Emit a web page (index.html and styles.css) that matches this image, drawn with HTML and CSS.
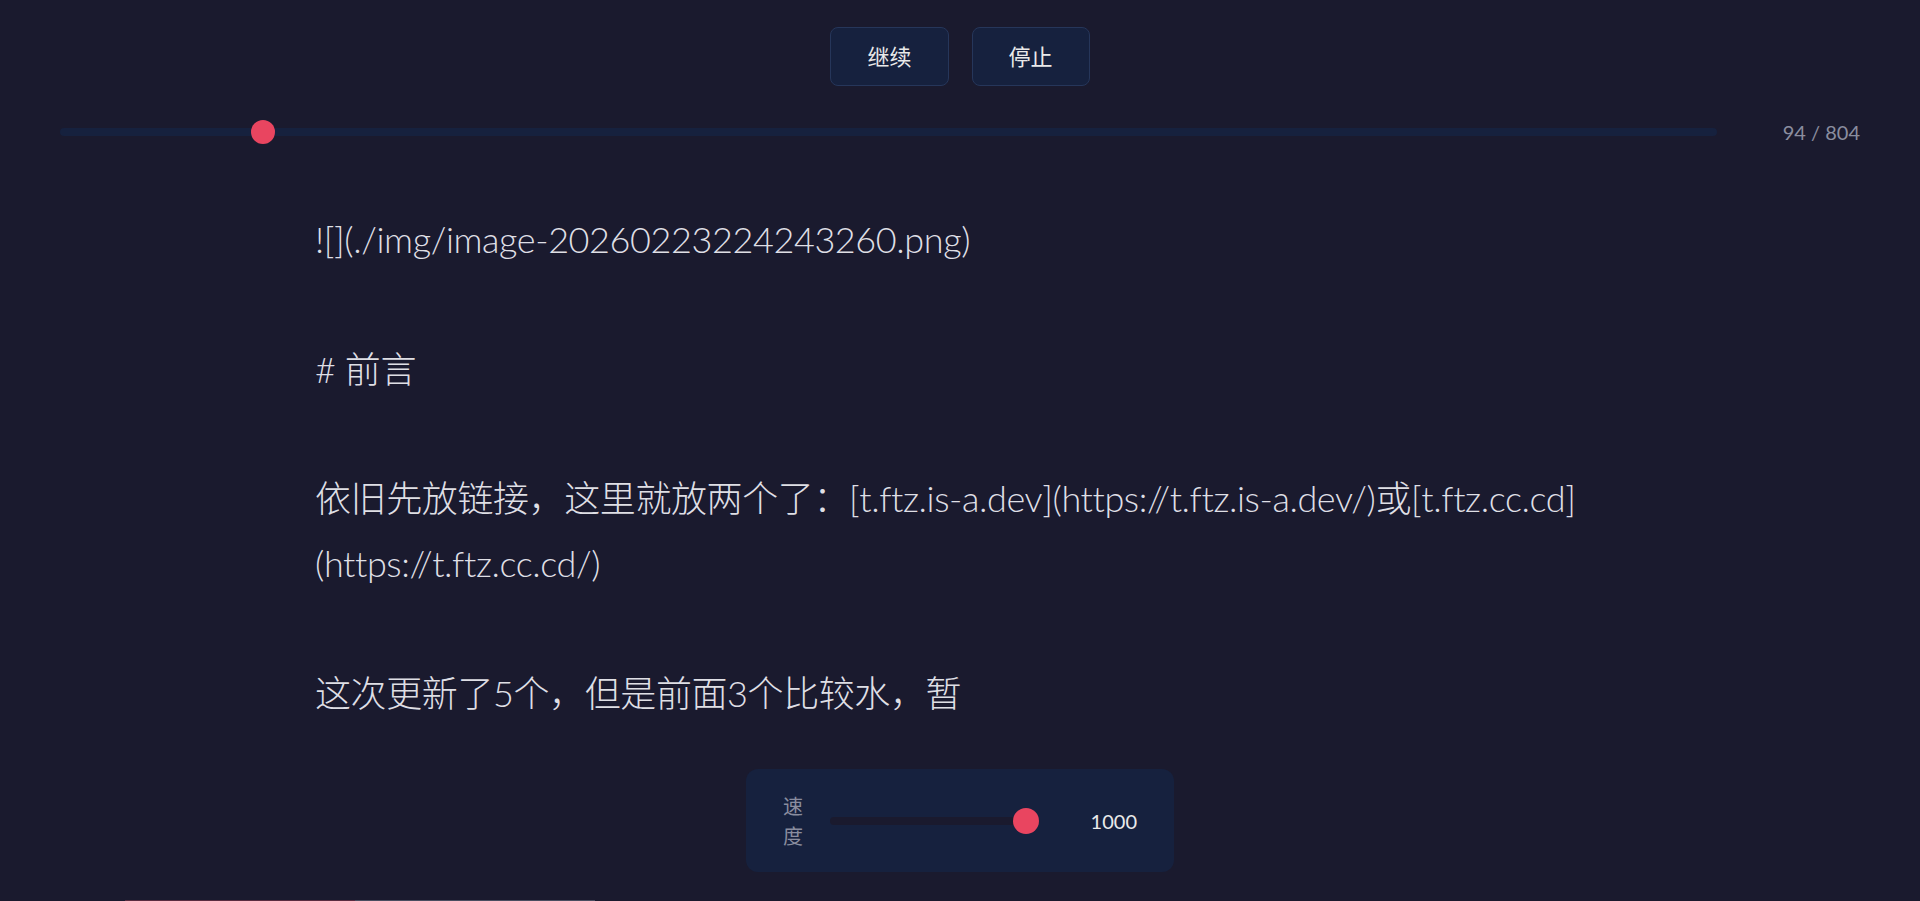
FILE: index.html
```html
<!DOCTYPE html>
<html lang="zh-CN">

<head>
    <meta charset="UTF-8">
    <meta name="viewport" content="width=device-width, initial-scale=1.0">
    <title>打字机</title>
    <link rel="stylesheet" href="styles.css">
</head>

<body>
    <div class="controls">
        <button class="btn">继续</button>
        <button class="btn">停止</button>
    </div>

    <div class="progress-row">
        <input class="progress" type="range" min="0" max="804" value="94">
        <span class="counter">94 / 804</span>
    </div>

    <div class="content">![](./img/image-20260223224243260.png)

# 前言

依旧先放链接，这里就放两个了：[t.ftz.is-a.dev](https://t.ftz.is-a.dev/)或[t.ftz.cc.cd](https://t.ftz.cc.cd/)

这次更新了5个，但是前面3个比较水，暂</div>

    <div class="speed">
        <span class="speed-label">速度</span>
        <input class="speed-range" type="range" min="50" max="1000" value="1000">
        <span class="speed-value">1000</span>
    </div>

    <div class="peek">
        <span class="peek-done"></span>
        <span class="peek-rest"></span>
    </div>
</body>

</html>
```

FILE: styles.css
```css
body {
    margin: 0;
    background: #1a1a2e;
    color: #eaeaea;
    font-family: Lato, "Noto Sans CJK SC", sans-serif;
    overflow: hidden;
}

.controls {
    display: flex;
    justify-content: center;
    gap: 23px;
    padding-top: 27px;
}

.btn {
    background: #16213e;
    color: #eaeaea;
    border: 1px solid #26365a;
    border-radius: 8px;
    padding: 12px 36px;
    font-family: inherit;
    font-size: 22px;
    line-height: 33px;
    cursor: pointer;
}

.progress-row {
    display: flex;
    align-items: center;
    gap: 24px;
    padding: 0 60px;
    margin-top: 34px;
    height: 24px;
}

.progress,
.speed-range {
    -webkit-appearance: none;
    appearance: none;
    margin: 0;
    height: 8px;
    border-radius: 4px;
    background: #16213e;
    outline: none;
}

.progress {
    flex: 1;
}

.progress::-webkit-slider-thumb {
    -webkit-appearance: none;
    width: 24px;
    height: 24px;
    border-radius: 50%;
    background: #e94560;
    cursor: pointer;
}

.counter {
    min-width: 119px;
    text-align: right;
    font-size: 20px;
    color: #8a8d9f;
}

.content {
    width: 1290px;
    margin: 63px auto 0;
    white-space: pre-wrap;
    font-size: 36px;
    font-weight: 300;
    line-height: 1.8;
    letter-spacing: -0.4px;
    color: #dfdfe5;
}

.speed {
    display: flex;
    align-items: center;
    gap: 27px;
    width: 428px;
    height: 103px;
    box-sizing: border-box;
    margin: 44px auto 0;
    padding: 0 37px;
    background: #16213e;
    border-radius: 12px;
}

.speed-label {
    width: 20px;
    font-size: 20px;
    line-height: 30px;
    color: #8a8d9f;
}

.speed-range {
    width: 210px;
    background: #1a1a2e;
}

.speed-range::-webkit-slider-thumb {
    -webkit-appearance: none;
    width: 26px;
    height: 26px;
    border-radius: 50%;
    background: #e94560;
    cursor: pointer;
}

.speed-value {
    min-width: 71px;
    text-align: right;
    font-size: 20px;
}

.peek {
    display: flex;
    margin: 28px 0 0 125px;
    width: 470px;
    height: 1px;
}

.peek-done {
    width: 230px;
    background: #5a2c40;
}

.peek-rest {
    flex: 1;
    background: #4a4d60;
}
```
